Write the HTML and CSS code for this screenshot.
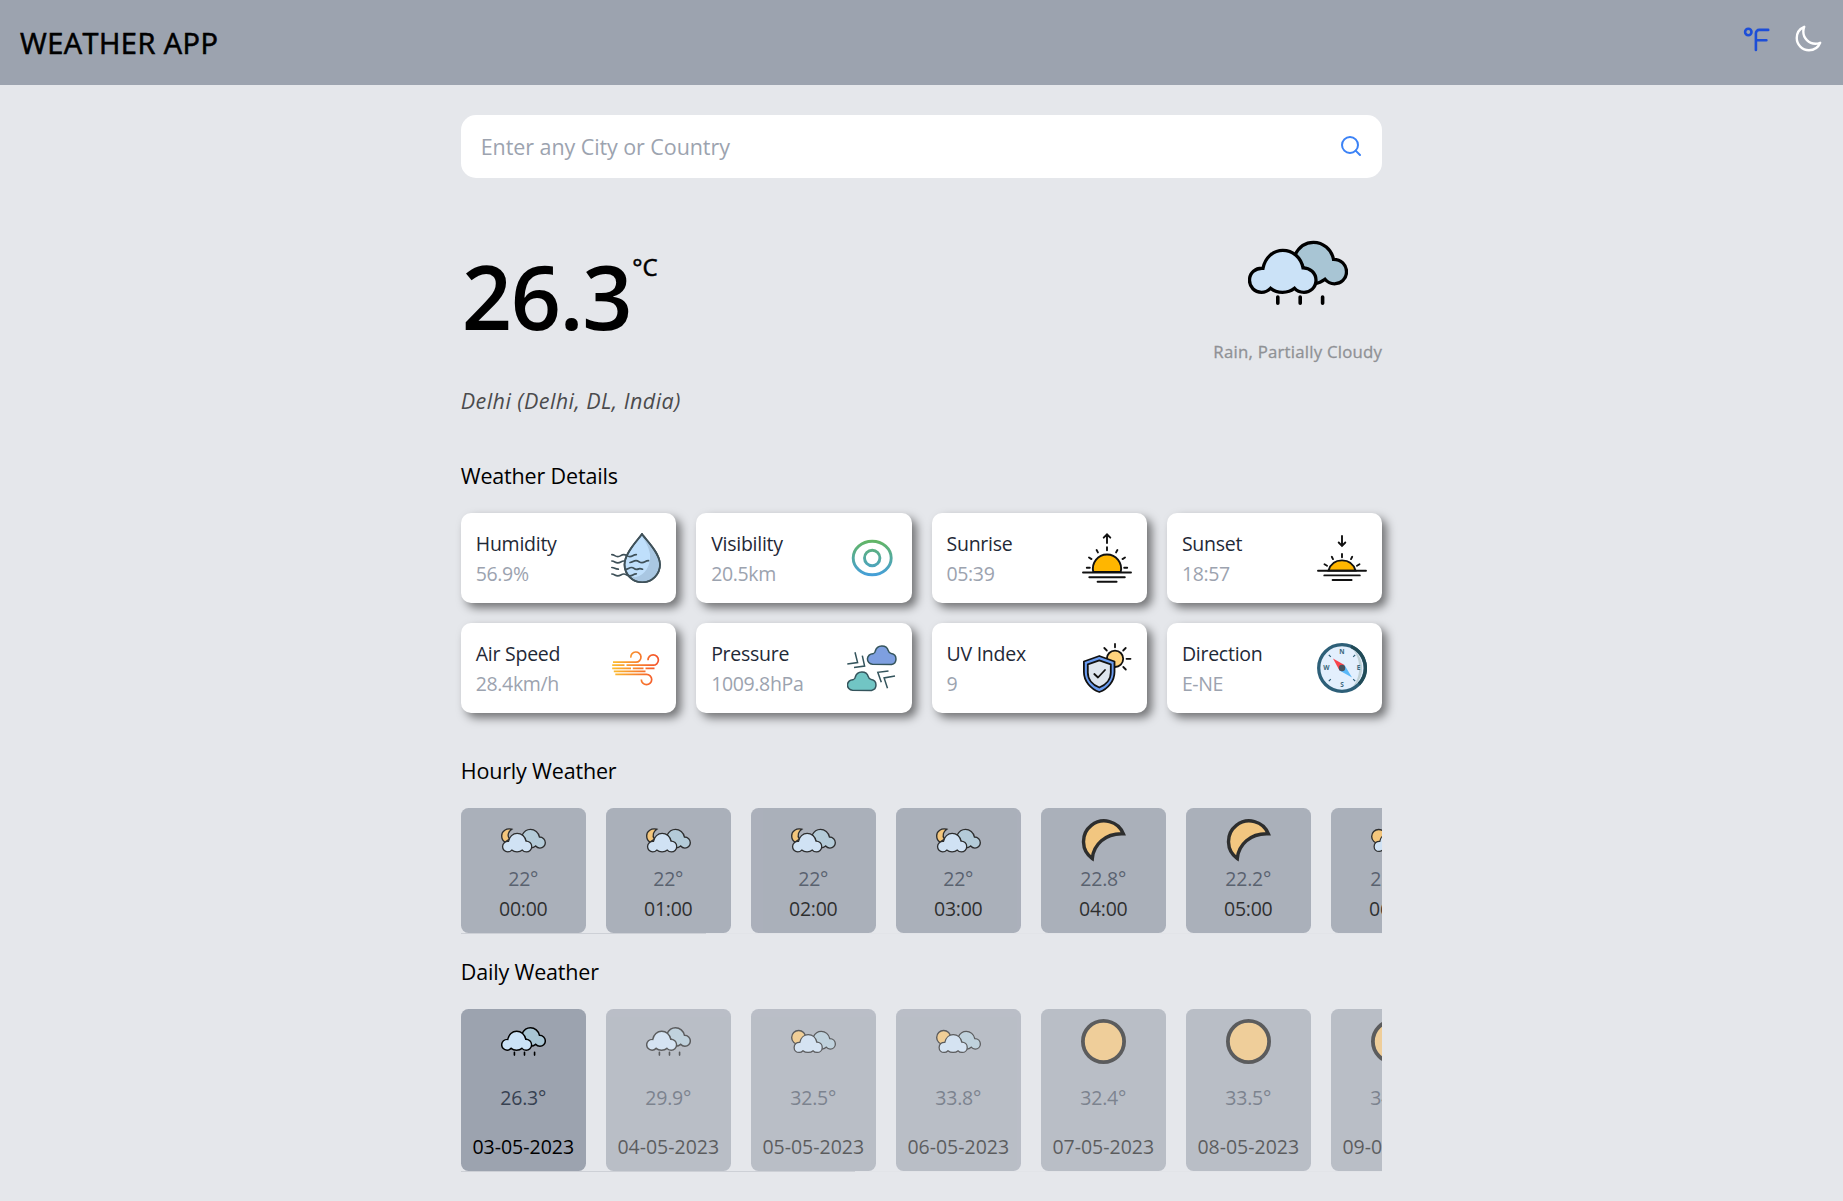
FILE: index.html
```html
<!DOCTYPE html>
<html lang="en">
<head>
<meta charset="utf-8">
<title>Weather App</title>
<link rel="stylesheet" href="styles.css">
</head>
<body>
<svg class="sprite" aria-hidden="true">
  <defs>
    <path id="cloud-front" d="M15 27.5C17 17 25 9.5 34.8 9.5C45 9.5 53 17 55 27C62 27 68 32 68 39.5C68 47 62 51.5 56 51.5C52 51.5 48.5 50 46.5 47.5C43 50.5 39 51.5 34.5 51.5C30 51.5 26 50.5 22.5 47.5C20 50 17 51.5 13.5 51.5C6.5 51.5 1.5 46 1.5 39.5C1.5 32 7.5 27 15 27.5Z"/>
    <path id="cloud-back" d="M47 14C51 6 57.5 1.5 65.5 1.5C75 1.5 83.5 8.5 85.5 18.5C93 18.5 98.5 24 98.5 31C98.5 38 93 43 86.5 43C83 43 79.5 41.5 77 38.5C74 41 70.5 42.5 66 43Z"/>
    <linearGradient id="eye" x1="0" y1="8" x2="0" y2="42" gradientUnits="userSpaceOnUse"><stop offset="0" stop-color="#62b565"/><stop offset="1" stop-color="#459fd8"/></linearGradient>
    <linearGradient id="breeze" x1="0" y1="0" x2="46" y2="0" gradientUnits="userSpaceOnUse"><stop offset="0" stop-color="#fcc02e"/><stop offset="1" stop-color="#f4552c"/></linearGradient>
  </defs>
  <symbol id="rain" viewBox="0 0 100 100">
    <g transform="translate(0 17.8)" stroke="#000" stroke-width="3.3">
      <use href="#cloud-back" fill="#a8c5d4"/><use href="#cloud-front" fill="#cbe2f7"/>
      <path d="M29.8 56.2v6.2M52.2 56.2v6.2M74.6 56.2v6.2" stroke-width="3.6" stroke-linecap="round"/>
    </g>
  </symbol>
  <symbol id="cloud-night" viewBox="0 0 100 100">
    <g transform="translate(0 23)" stroke="#000" stroke-width="3">
      <path d="M24 2C12-1 1.500 6 1.500 16.500C1.500 23 4 28 9 30.500L19 24C12 15 18 6 24 2Z" fill="#f8bf61"/>
      <use href="#cloud-back" fill="#a8c5d4" transform="translate(0 .8)"/><use href="#cloud-front" fill="#cbe2f7" transform="translate(2 2) scale(.975)"/>
    </g>
  </symbol>
  <symbol id="cloud-day" viewBox="0 0 100 100">
    <g transform="translate(0 24)" stroke="#000" stroke-width="3">
      <circle cx="17" cy="17" r="15.500" fill="#f8bf61"/>
      <use href="#cloud-back" fill="#a8c5d4" transform="translate(5 2) scale(.95)"/><use href="#cloud-front" fill="#cbe2f7" transform="translate(5.500 2) scale(.94)"/>
    </g>
  </symbol>
  <symbol id="night" viewBox="0 0 45 45">
    <path d="M42.400 15.800A20.700 20.700 0 1 0 11.300 40.500C12.500 27 24 15 42.400 15.800Z" fill="#f6bf66" stroke="#000" stroke-width="3.400"/>
  </symbol>
  <symbol id="day" viewBox="0 0 45 45">
    <circle cx="22.500" cy="22.500" r="20.600" fill="#f6bf66" stroke="#000" stroke-width="3.800"/>
  </symbol>
</svg>

<header class="topbar">
  <h1 class="brand">WEATHER APP</h1>
  <div class="actions">
    <svg class="action unit" viewBox="0 0 30 30"><circle cx="5.300" cy="8" r="3.200"/><path d="M12.900 26V9.200a3.300 3.300 0 0 1 3.300-3.300h9M12.900 16.200h10.500"/></svg>
    <svg class="action moon" viewBox="0 0 24 24"><path d="M21.752 15.002A9.718 9.718 0 0118 15.750c-5.385 0-9.750-4.365-9.750-9.750 0-1.330.266-2.597.748-3.752A9.753 9.753 0 003 11.250C3 16.635 7.365 21 12.750 21a9.753 9.753 0 009.002-5.998z"/></svg>
  </div>
</header>

<main class="page">
  <div class="search">
    <input class="search-input" type="text" placeholder="Enter any City or Country">
    <svg class="search-icon" viewBox="0 0 24 24"><circle cx="11" cy="11" r="8"/><path d="M21 21l-4.350-4.350"/></svg>
  </div>

  <section class="current">
    <div class="reading">
      <div class="temp"><span class="temp-value">26.3</span><span class="temp-unit">°C</span></div>
      <p class="place">Delhi (Delhi, DL, India)</p>
    </div>
    <div class="condition">
      <svg class="condition-icon"><use href="#rain"/></svg>
      <p class="condition-text">Rain, Partially Cloudy</p>
    </div>
  </section>

  <h2 class="heading">Weather Details</h2>
  <section class="details">
    <article class="detail">
      <div class="detail-text"><p class="label">Humidity</p><p class="value">56.9%</p></div>
      <svg class="detail-icon" viewBox="0 0 50 50" fill="none" stroke="#3f5159" stroke-width="1.700" stroke-linecap="round">
        <path d="M31 1C27 7 13.500 20 13.500 31.500A17.700 17.700 0 0 0 49 31.500C49 20 35 7 31 1Z" fill="#a9c7e2"/>
        <path d="M31 3C26 10 14.800 21 14.800 32C16 42 22 45 25 44C34 42 40 33 39 21C38 14 34 8 31 3Z" fill="#bfdffb" stroke="none"/>
        <path d="M31 1C27 7 13.500 20 13.500 31.500A17.700 17.700 0 0 0 49 31.500C49 20 35 7 31 1Z"/>
        <path d="M.8 21.600c3 0 3 2 6 2s3-2 6-2 3 2 6 2 3-2 6.500-2M.8 28c3 0 3 1.800 6 1.800s3-1.800 6-1.800M19 29.500c3 0 3-1.800 6-1.800s3 2 6 2 3-2 6.500-2M.8 34.500c3 0 3 1.700 6.500 1.700M14.500 36.300c3 0 3-1.800 6-1.800s2 1.900 5 1.900 2-1.800 6-.2M.8 41c3 0 3 1.800 6 1.800s3-1.800 6-1.800 3 1.800 6 1.800 3-1.800 6.500-2"/>
      </svg>
    </article>
    <article class="detail">
      <div class="detail-text"><p class="label">Visibility</p><p class="value">20.5km</p></div>
      <svg class="detail-icon" viewBox="0 0 50 50" fill="none" stroke="url(#eye)" stroke-width="2.900"><ellipse cx="25.200" cy="25" rx="19" ry="16.800"/><circle cx="25.200" cy="25" r="7.700"/></svg>
    </article>
    <article class="detail">
      <div class="detail-text"><p class="label">Sunrise</p><p class="value">05:39</p></div>
      <svg class="detail-icon" viewBox="0 0 50 50" fill="none" stroke="#111" stroke-width="1.900" stroke-linecap="round">
        <path d="M11.300 39A14.100 14.100 0 1 1 38.700 39Z" fill="#ffb600"/>
        <path d="M1 39.500h48M7.300 44.300h35.500M15.600 48.800h19M25 10V1.500M21.700 4.700L25 1.400l3.300 3.300M25 14.200v3M14.600 17l1.300 2.400M35.400 17l-1.300 2.400M7 24.500l2.500 1.600M43 24.500l-2.500 1.600M4.800 34.700h3M42.200 34.700h3"/>
      </svg>
    </article>
    <article class="detail">
      <div class="detail-text"><p class="label">Sunset</p><p class="value">18:57</p></div>
      <svg class="detail-icon" viewBox="0 0 50 50" fill="none" stroke="#111" stroke-width="1.900" stroke-linecap="round">
        <path d="M11.500 37.600C13.500 31 18.500 27.400 25 27.400S36.500 31 38.500 37.600Z" fill="#ffb600"/>
        <path d="M1 37.800h48M7.300 42.400h35.500M15.600 47h19M25 3v9.500M21.700 9.500L25 12.800l3.300-3.300M25 21v3.200M14.800 23.800l1.200 2.300M35.200 23.800l-1.200 2.300M7.500 31.200l2.500 1.500M42.500 31.200l-2.500 1.500"/>
      </svg>
    </article>
    <article class="detail">
      <div class="detail-text"><p class="label">Air Speed</p><p class="value">28.4km/h</p></div>
      <svg class="detail-icon" viewBox="0 0 50 50" fill="none" stroke="url(#breeze)" stroke-width="1.700">
        <path d="M2 19.200H25A5.100 5.100 0 1 0 19.800 14.600M1.200 22.200H13.500M15.500 22.200H42A5.200 5.200 0 1 0 37 17.200M1.200 25.300H20M21.800 25.300H32.500M34.500 25.300H43.500M2.800 28.300H34.500M4.300 31.300H35.500A5.200 5.200 0 1 1 30.300 36.500"/>
      </svg>
    </article>
    <article class="detail">
      <div class="detail-text"><p class="label">Pressure</p><p class="value">1009.8hPa</p></div>
      <svg class="detail-icon" viewBox="0 0 50 50" fill="none" stroke="#34545c" stroke-width="1.500">
        <path d="M25.500 21.300A4.800 4.800 0 0 1 26 10.700C27.500 10.500 28 10.300 28.300 8C30 1.500 39.500 1.400 41.300 7.700C41.700 9.700 42.300 10.100 44.300 10.600C50.500 11.500 50.500 20.500 44.500 21.400Z" fill="#7e9fe0"/>
        <path d="M5.500 47.300A4.800 4.800 0 0 1 6 36.700C7.500 36.500 8 36.300 8.300 34C10 27.500 19.500 27.400 21.300 33.700C21.700 35.700 22.300 36.100 24.300 36.600C30.500 37.500 30.500 46.500 24.500 47.400Z" fill="#71c5c4"/>
        <path d="M8 9.200l2.600 10.400L.3 20.900M15.300 12.700l2.300 10.400-10.600 1.500M41.500 27.900l-10.700 1.400 3.500 10M48 33l-10.900 1.900 3.400 10.300"/>
      </svg>
    </article>
    <article class="detail">
      <div class="detail-text"><p class="label">UV Index</p><p class="value">9</p></div>
      <svg class="detail-icon" viewBox="0 0 50 50" fill="none" stroke="#111" stroke-width="1.800" stroke-linecap="round" stroke-linejoin="round">
        <circle cx="33" cy="15.800" r="8.200" fill="#ffd37d"/>
        <path d="M33 1v3.300M22.300 5l2.500 2.500M43.700 5l-2.500 2.500M44.500 15.800h4M41.300 24l2.500 2.500"/>
        <path d="M17.300 13L32.500 18.500V29C32.500 38 26 46 17.300 49C8.500 46 1.900 38 1.900 29V18.500Z" fill="#699bf0"/>
        <path d="M17.300 17.300L28.800 21.300V29.500C28.800 36.500 23.800 42 17.300 44.500C10.700 42 5.800 36.500 5.800 29.500V21.300Z" fill="#dee5ee"/>
        <path d="M12.300 31l3.700 3.500 7-7.500"/>
      </svg>
    </article>
    <article class="detail">
      <div class="detail-text"><p class="label">Direction</p><p class="value">E-NE</p></div>
      <svg class="detail-icon" viewBox="0 0 50 50">
        <circle cx="25" cy="25" r="23.300" fill="#e3effd"/>
        <path d="M31 2.500A25 25 0 0 1 31 47.500C46 39 46 11 31 2.500Z" fill="#c0d0d5"/>
        <circle cx="25" cy="25" r="23.300" fill="none" stroke="#2d5f78" stroke-width="3.300"/>
        <path d="M34 3.500A23.300 23.300 0 0 1 42 41" fill="none" stroke="#214b57" stroke-width="3.300"/>
        <path d="M11.800 11.800l2 2M38.200 11.800l-2 2M11.800 38.200l2-2M38.200 38.200l-2-2" stroke="#2d5f78" stroke-width="1.200"/>
        <path d="M16 15.500L27.500 22 22.500 27.500Z" fill="#f9444c"/><path d="M35 34.500L27.500 22 22.500 27.500Z" fill="#5ab8f8"/>
        <circle cx="25" cy="25" r="3.200" fill="#46535f"/>
        <g class="compass-text"><text x="25" y="10.800">N</text><text x="41.500" y="27.300">E</text><text x="25" y="43.500">S</text><text x="9.500" y="27.300">W</text></g>
      </svg>
    </article>
  </section>

  <h2 class="heading">Hourly Weather</h2>
  <section class="strip hourly">
    <article class="tile"><svg class="tile-icon"><use href="#cloud-night"/></svg><p class="degrees">22°</p><p class="when">00:00</p></article>
    <article class="tile"><svg class="tile-icon"><use href="#cloud-night"/></svg><p class="degrees">22°</p><p class="when">01:00</p></article>
    <article class="tile"><svg class="tile-icon"><use href="#cloud-night"/></svg><p class="degrees">22°</p><p class="when">02:00</p></article>
    <article class="tile"><svg class="tile-icon"><use href="#cloud-night"/></svg><p class="degrees">22°</p><p class="when">03:00</p></article>
    <article class="tile"><svg class="tile-icon"><use href="#night"/></svg><p class="degrees">22.8°</p><p class="when">04:00</p></article>
    <article class="tile"><svg class="tile-icon"><use href="#night"/></svg><p class="degrees">22.2°</p><p class="when">05:00</p></article>
    <article class="tile"><svg class="tile-icon"><use href="#cloud-day"/></svg><p class="degrees">22.2°</p><p class="when">06:00</p></article>
  </section>
  <div class="track"><div class="thumb thumb-hourly"></div></div>

  <h2 class="heading heading-daily">Daily Weather</h2>
  <section class="strip daily">
    <article class="tile selected"><svg class="tile-icon"><use href="#rain"/></svg><p class="degrees">26.3°</p><p class="when">03-05-2023</p></article>
    <article class="tile"><svg class="tile-icon"><use href="#rain"/></svg><p class="degrees">29.9°</p><p class="when">04-05-2023</p></article>
    <article class="tile"><svg class="tile-icon"><use href="#cloud-day"/></svg><p class="degrees">32.5°</p><p class="when">05-05-2023</p></article>
    <article class="tile"><svg class="tile-icon"><use href="#cloud-day"/></svg><p class="degrees">33.8°</p><p class="when">06-05-2023</p></article>
    <article class="tile"><svg class="tile-icon"><use href="#day"/></svg><p class="degrees">32.4°</p><p class="when">07-05-2023</p></article>
    <article class="tile"><svg class="tile-icon"><use href="#day"/></svg><p class="degrees">33.5°</p><p class="when">08-05-2023</p></article>
    <article class="tile"><svg class="tile-icon"><use href="#day"/></svg><p class="degrees">34.1°</p><p class="when">09-05-2023</p></article>
  </section>
  <div class="track"><div class="thumb thumb-daily"></div></div>
</main>
</body>
</html>
```
FILE: styles.css
```css
* { box-sizing: border-box; margin: 0; padding: 0; }
body {
  min-height: 1201px;
  background: #e5e7eb;
  color: #000;
  font-family: "Open Sans", "Noto Sans", sans-serif;
  font-size: 19.5px;
  line-height: 30px;
  overflow: hidden;
}
svg { display: block; flex: none; }
.sprite { position: absolute; width: 0; height: 0; }

.topbar {
  display: flex;
  justify-content: space-between;
  align-items: flex-start;
  height: 85px;
  padding: 20px;
  background: #9ca3af;
}
.brand { font-size: 29px; line-height: 45px; font-weight: 400; letter-spacing: 0.45px; -webkit-text-stroke: 0.6px #000; }
.actions { display: flex; gap: 20px; padding-top: 4px; }
.action { width: 30px; height: 30px; fill: none; stroke-linecap: round; stroke-linejoin: round; }
.unit { stroke: #1d4ed8; stroke-width: 2.6; }
.moon { stroke: #fff; stroke-width: 1.9; }

.page { width: 50%; margin: 0 auto; padding-top: 30px; }
.search {
  display: flex;
  align-items: center;
  height: 63px;
  padding: 0 19px 0 20px;
  border-radius: 15px;
  background: #fff;
}
.search-input { flex: 1; border: 0; outline: 0; background: none; font: inherit; font-size: 21.5px; letter-spacing: -0.08px; }
.search-input::placeholder { color: #9ca3af; opacity: 1; }
.search-icon { width: 24px; height: 24px; margin-bottom: 1px; fill: none; stroke: #3b82f6; stroke-width: 2; stroke-linecap: round; }

.current { display: flex; justify-content: space-between; height: 280px; padding-top: 45px; }
.reading { padding-top: 28px; }
.temp { display: flex; height: 90px; }
.temp-value { padding-left: 1px; font-size: 88px; line-height: 90px; font-weight: 600; letter-spacing: -1.4px; }
.temp-unit { margin-top: -2px; padding-left: 1px; font-size: 24px; line-height: 35px; -webkit-text-stroke: 0.5px #000; }
.place { margin-top: 42px; font-size: 21.5px; line-height: 35px; font-style: italic; letter-spacing: 0.45px; color: #4b4b4d; }
.condition { display: flex; flex-direction: column; align-items: center; }
.condition-icon { width: 100px; height: 100px; }
.condition-text { margin-top: 14px; font-size: 16.8px; letter-spacing: 0.23px; color: #8f9195; -webkit-text-stroke: 0.3px #8f9195; }

.heading { font-size: 21.5px; line-height: 35px; font-weight: 400; letter-spacing: -0.17px; margin-bottom: 20px; }
.details { display: grid; grid-template-columns: repeat(4, 1fr); gap: 20px; margin-bottom: 40px; }
.detail {
  display: flex;
  justify-content: space-between;
  align-items: center;
  height: 90px;
  padding: 15px;
  border-radius: 10px;
  background: #fff;
  box-shadow: 5px 5px 10px rgba(0, 0, 0, 0.5);
}
.detail-text { padding-top: 1px; letter-spacing: -0.25px; }
.label { color: #1f2937; }
.value { color: #9ca3af; letter-spacing: -0.35px; }
.detail-icon { width: 50px; height: 50px; }
.compass-text { font-size: 6.5px; font-weight: 700; text-anchor: middle; fill: #3b677c; letter-spacing: 0; }

.strip { display: flex; gap: 20px; overflow: hidden; }
.tile {
  display: flex;
  flex-direction: column;
  align-items: center;
  flex: none;
  width: 125px;
  height: 125px;
  padding: 10px 0;
  border-radius: 7.5px;
  background: #9ca3af;
}
.tile-icon { width: 45px; height: 45px; }
.degrees { color: #374151; letter-spacing: -0.2px; }
.hourly .tile { opacity: 0.8; }
.hourly .tile-icon { margin-bottom: 1px; }
.hourly .when { letter-spacing: -0.25px; }
.daily .tile { height: 162px; opacity: 0.6; justify-content: space-between; padding-bottom: 9px; }
.daily .selected { opacity: 1; }
.track { height: 1px; background: #e2e4e8; }
.thumb { height: 1px; background: #cdd0d6; }
.thumb-hourly { width: 245px; }
.thumb-daily { width: 394px; }
.heading-daily { margin-top: 20px; }
```
